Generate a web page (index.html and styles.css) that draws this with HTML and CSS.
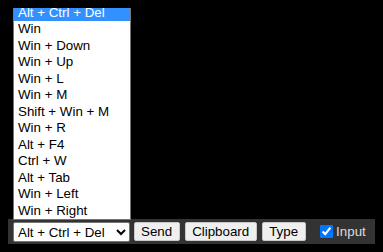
FILE: index.html
```html
<!DOCTYPE html>
<html lang="en">
<head>
    <meta charset="UTF-8">
    <meta name="viewport" content="width=device-width, initial-scale=1.0">
    <title>Remote Keys</title>
    <link rel="stylesheet" href="styles.css">
</head>
<body>
    <div class="screen"></div>

    <div class="toolbar">
        <ul class="keyList">
            <li class="selected">Alt + Ctrl + Del</li>
            <li>Win</li>
            <li>Win + Down</li>
            <li>Win + Up</li>
            <li>Win + L</li>
            <li>Win + M</li>
            <li>Shift + Win + M</li>
            <li>Win + R</li>
            <li>Alt + F4</li>
            <li>Ctrl + W</li>
            <li>Alt + Tab</li>
            <li>Win + Left</li>
            <li>Win + Right</li>
        </ul>
        <select id="keySelect" class="keySelect">
            <option>Alt + Ctrl + Del</option>
            <option>Win</option>
            <option>Win + Down</option>
            <option>Win + Up</option>
            <option>Win + L</option>
            <option>Win + M</option>
            <option>Shift + Win + M</option>
            <option>Win + R</option>
            <option>Alt + F4</option>
            <option>Ctrl + W</option>
            <option>Alt + Tab</option>
            <option>Win + Left</option>
            <option>Win + Right</option>
        </select>
        <button class="toolBtn">Send</button>
        <button class="toolBtn">Clipboard</button>
        <button class="toolBtn">Type</button>
        <label class="inputToggle"><input type="checkbox" checked>Input</label>
    </div>
</body>
</html>
```

FILE: styles.css
```css
body {
    margin: 8px;
    background-color: #000;
    font-family: "Liberation Sans", Arial, sans-serif;
    font-size: 13.33px;
}
.screen {
    height: 211px;
}
.toolbar {
    position: relative;
    display: flex;
    align-items: center;
    height: 25px;
    margin-right: -8px;
    padding: 0 5px;
    background-color: #333;
}
.keySelect {
    width: 117px;
    height: 20px;
    margin: 1px 0 0 0;
    font-family: "Liberation Sans", Arial, sans-serif;
    font-size: 13.33px;
    background-color: #fff;
    border: 1px solid #767676;
    border-radius: 2px;
    color: #000;
}
.toolBtn {
    height: 19px;
    margin: 0 0 0 4px;
    padding: 0 7px 0 6px;
    font-family: "Liberation Sans", Arial, sans-serif;
    font-size: 13.33px;
    background-color: #efefef;
    border: 1px solid #c8c8c8;
    border-radius: 2px;
    color: #000;
}
.toolBtn + .toolBtn {
    margin-left: 5px;
}
.inputToggle {
    display: flex;
    align-items: center;
    margin-left: 14px;
    color: #ddd;
}
.inputToggle input {
    width: 13px;
    height: 13px;
    margin: 0 3px 0 0;
    accent-color: #0075ff;
}
.keyList {
    position: absolute;
    left: 5px;
    bottom: 24px;
    width: 116px;
    margin: 0;
    padding: 0;
    list-style: none;
    background-color: #fff;
    border: 1px solid #767676;
}
.keyList li {
    height: 16.5px;
    line-height: 16.5px;
    padding-left: 4px;
    color: #000;
    white-space: nowrap;
}
.keyList li.selected {
    background-color: #3390ff;
    color: #fff;
}
```
